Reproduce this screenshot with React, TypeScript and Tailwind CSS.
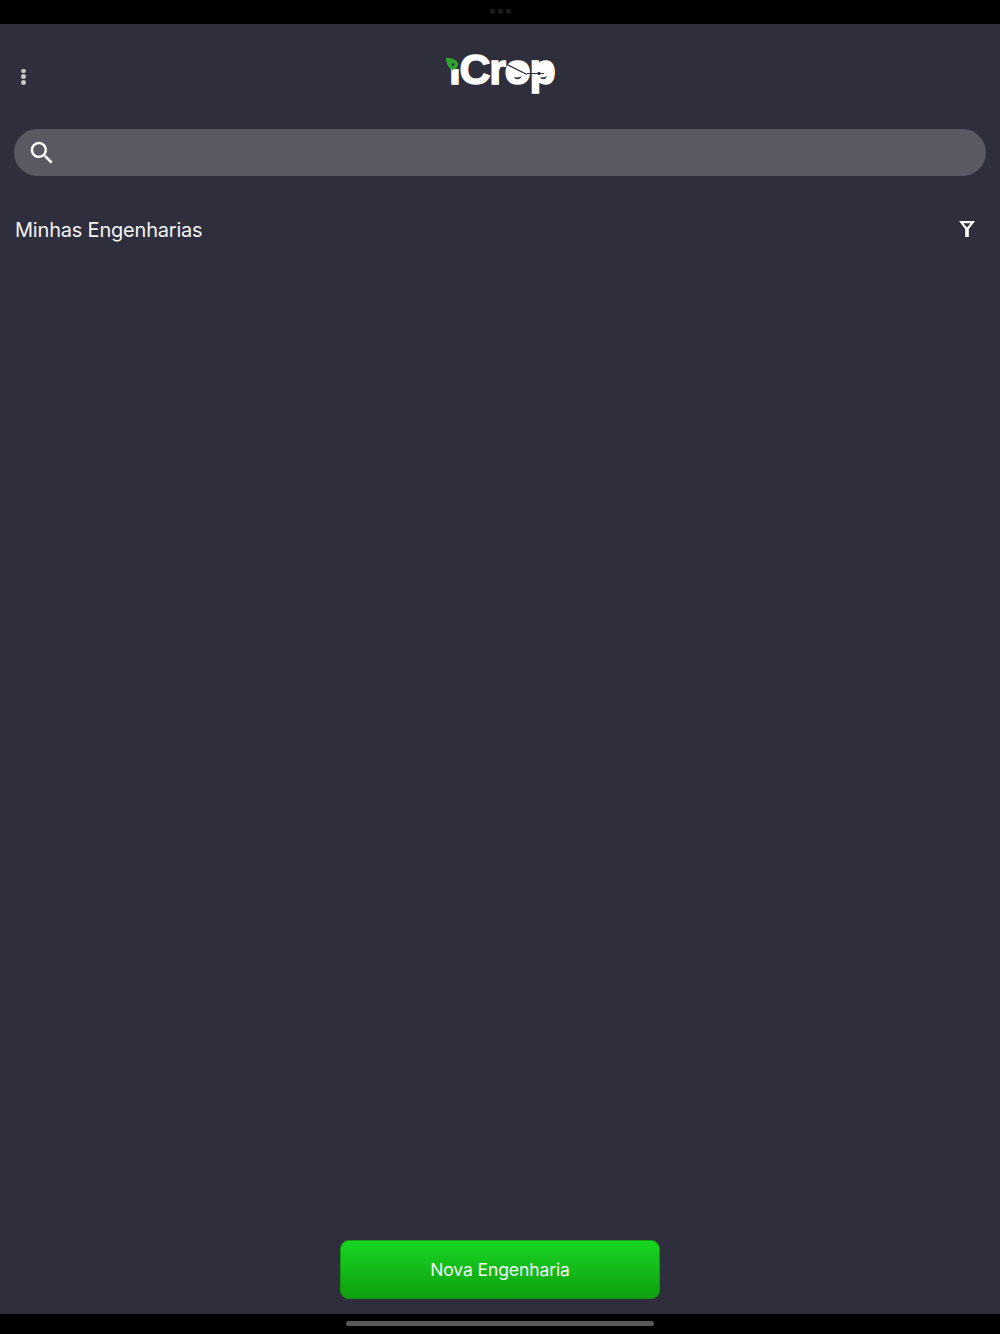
function Dot() {
  return <span className="h-[4.5px] w-[5px] rounded-full bg-[#c4c4c8]" />;
}

function Logo() {
  return (
    <div className="relative h-[48px] w-[110px]">
      <div className="mt-[-3px] flex h-[48px] items-start whitespace-nowrap pl-[4px] font-['Liberation_Sans',sans-serif] text-[43px] font-bold leading-[48px] tracking-[-1.4px] text-white [-webkit-text-stroke:1.4px_white]">
        <span className="inline-block [clip-path:inset(24px_0_0_0)]">i</span>
        <span>Crop</span>
      </div>
      <svg className="absolute left-0 top-0" width="110" height="48" viewBox="0 0 110 48" fill="none">
        <path d="M1 13C6 12.5 12 14.5 13 18.5C13.5 22 10 25.5 7 24.5C3.5 23.5 1 18 1 13Z" fill="#2fa52f" />
        <circle cx="8" cy="19.5" r="1.4" fill="#2f2e3d" />
        <circle cx="72" cy="24.5" r="8" fill="white" />
        <circle cx="97" cy="24.5" r="8" fill="white" />
        <path d="M62 19.5L82 29.5M82 28.5H99" stroke="#2f2e3d" strokeWidth="1.2" />
        <circle cx="94" cy="28.5" r="1.7" fill="#2f2e3d" />
      </svg>
    </div>
  );
}

export default function App() {
  return (
    <div className="flex h-[1334px] w-[1000px] flex-col overflow-hidden bg-black font-['Inter',sans-serif] text-white">
      <div className="flex h-6 shrink-0 items-center justify-center gap-[3px] pb-[1px]">
        <span className="h-[5px] w-[5px] rounded-full bg-[#1c1c1e]" />
        <span className="h-[5px] w-[5px] rounded-full bg-[#1c1c1e]" />
        <span className="h-[5px] w-[5px] rounded-full bg-[#1c1c1e]" />
      </div>
      <main className="flex min-h-0 flex-1 flex-col bg-[#2f2e3d]">
        <header className="grid h-[105px] shrink-0 grid-cols-[1fr_110px_1fr] items-start">
          <div className="flex flex-col gap-[1.25px] pl-[21px] pt-[44.5px]">
            <Dot />
            <Dot />
            <Dot />
          </div>
          <div className="pt-[24px]">
            <Logo />
          </div>
        </header>
        <div className="mx-[14px] flex h-[47px] shrink-0 items-center rounded-[24px] bg-[#5a5963] pl-[13px]">
          <svg className="h-[30px] w-[30px]" viewBox="0 0 24 24" fill="white">
            <path d="M15.5 14h-.79l-.28-.27C15.41 12.59 16 11.11 16 9.5 16 5.91 13.09 3 9.5 3S3 5.91 3 9.5 5.91 16 9.5 16c1.61 0 3.09-.59 4.23-1.57l.27.28v.79l5 4.99L20.49 19l-4.99-5zm-6 0C7.01 14 5 11.99 5 9.5S7.01 5 9.5 5 14 7.01 14 9.5 11.99 14 9.5 14z" />
          </svg>
        </div>
        <div className="flex h-[107px] shrink-0 items-start justify-between pl-[15px] pr-[25px] pt-[41px]">
          <span className="text-[20px] leading-[26px] tracking-[-0.2px] text-[#f4f4f6]">Minhas Engenharias</span>
          <svg className="mt-[3.5px]" width="16" height="16" viewBox="0 0 16 16" fill="white" fillRule="evenodd">
            <path d="M0 0H16L9.8 8V16H6.2V8ZM4.4 2.3L8 6.6L11.6 2.3Z" />
          </svg>
        </div>
        <div className="flex-1" />
        <div className="flex shrink-0 justify-center pb-[15px]">
          <button className="h-[59px] w-[320px] rounded-[9px] border border-[#119a11] bg-gradient-to-b from-[#17d621] to-[#0fa010] pt-[1px] text-[17.5px] tracking-[-0.1px] text-[#f4f8f4]">
            Nova Engenharia
          </button>
        </div>
      </main>
      <div className="flex h-[20px] shrink-0 items-start justify-center pt-[7px]">
        <span className="h-[5px] w-[308px] rounded-full bg-[#59595c]" />
      </div>
    </div>
  );
}
